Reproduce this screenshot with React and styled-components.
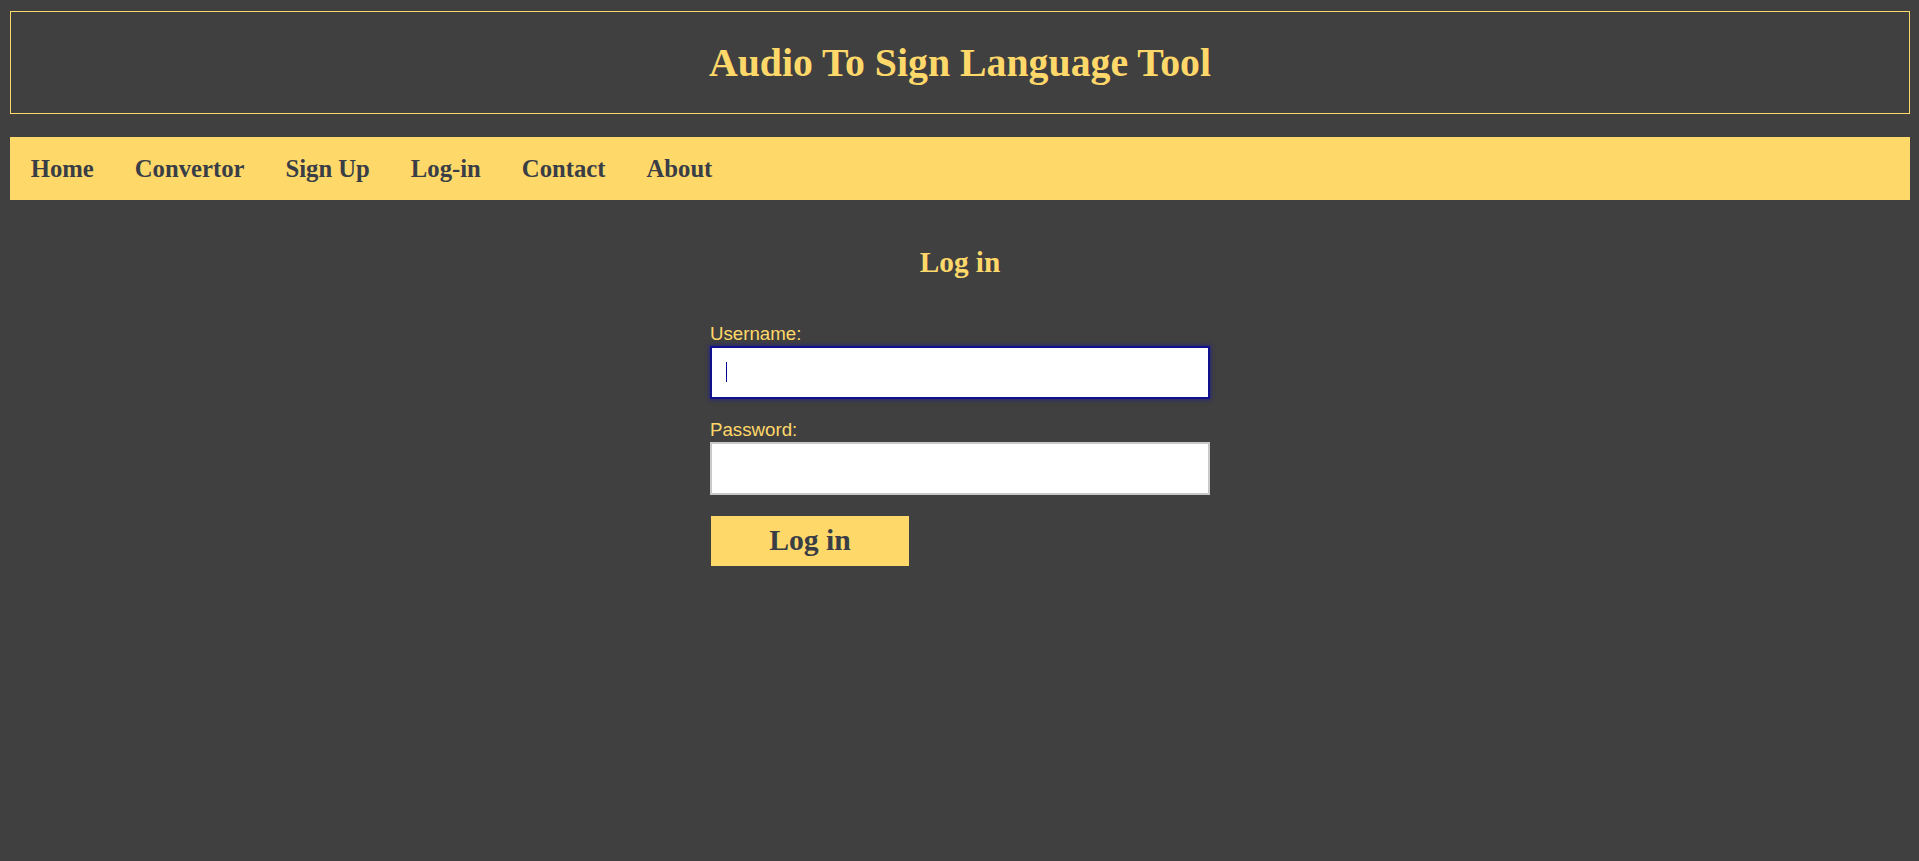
import React from "react";
import styled, { createGlobalStyle } from "styled-components";

const GlobalStyle = createGlobalStyle`
  html, body {
    margin: 0;
    padding: 0;
    background: #404040;
  }
  body {
    font-family: "Liberation Serif", "Times New Roman", serif;
  }
`;

const YELLOW = "#ffd86a";
const DARK = "#393e46";

const Page = styled.div`
  min-height: 861px;
  box-sizing: border-box;
  padding: 11px 9px 0 10px;
  background: #404040;
`;

const Header = styled.header`
  border: 1px solid ${YELLOW};
`;

const Title = styled.h1`
  margin: 27.5px 0;
  text-align: center;
  font-family: "Liberation Serif", "Times New Roman", serif;
  font-weight: bold;
  font-size: 39.8px;
  line-height: 46px;
  color: ${YELLOW};
`;

const Nav = styled.nav`
  margin-top: 23px;
  height: 63px;
  background: ${YELLOW};
  display: flex;
  align-items: center;
`;

const NavLink = styled.a`
  display: block;
  padding: 0 20.5px;
  line-height: 63px;
  font-family: "Liberation Serif", "Times New Roman", serif;
  font-weight: bold;
  font-size: 24.7px;
  color: ${DARK};
  text-decoration: none;
  cursor: pointer;
  &:first-child {
    padding-left: 20.7px;
  }
`;

const Main = styled.main`
  padding-top: 46px;
  display: flex;
  flex-direction: column;
  align-items: center;
`;

const Heading = styled.h2`
  margin: 0 0 45px;
  font-family: "Liberation Serif", "Times New Roman", serif;
  font-weight: bold;
  font-size: 29.3px;
  line-height: 32.4px;
  color: ${YELLOW};
`;

const Form = styled.form`
  width: 500px;
  display: flex;
  flex-direction: column;
  align-items: flex-start;
`;

const Label = styled.label`
  display: block;
  font-family: "Liberation Sans", Arial, sans-serif;
  font-size: 18.7px;
  line-height: 22px;
  color: ${YELLOW};
  margin: ${(p) => (p.$first ? "0" : "19.6px")} 0 1px;
`;

const Field = styled.div`
  position: relative;
  width: 500px;
  height: 53px;
`;

const Caret = styled.span`
  position: absolute;
  left: 16px;
  top: 16px;
  width: 1px;
  height: 20px;
  background: #00008b;
  pointer-events: none;
`;

const Input = styled.input`
  box-sizing: border-box;
  display: block;
  width: 500px;
  height: 53px;
  padding: 0 14px;
  background: #ffffff;
  border: 2px solid #c8c8c8;
  border-radius: 0;
  font-family: "Liberation Sans", Arial, sans-serif;
  font-size: 19.6px;
  color: #000;
  caret-color: transparent;
  outline: none;
  &:focus {
    border-color: #10108c;
    box-shadow: 0 0 4px 1px rgba(20, 20, 160, 0.55);
  }
`;

const Button = styled.button`
  margin-top: 20.5px;
  margin-left: 1px;
  width: 198px;
  height: 50px;
  border: none;
  padding: 0;
  background: ${YELLOW};
  font-family: "Liberation Serif", "Times New Roman", serif;
  font-weight: bold;
  font-size: 29.7px;
  color: ${DARK};
  cursor: pointer;
`;

const links = ["Home", "Convertor", "Sign Up", "Log-in", "Contact", "About"];

export default function App() {
  return (
    <>
      <GlobalStyle />
      <Page>
        <Header>
          <Title>Audio To Sign Language Tool</Title>
        </Header>
        <Nav>
          {links.map((l) => (
            <NavLink key={l}>{l}</NavLink>
          ))}
        </Nav>
        <Main>
          <Heading>Log in</Heading>
          <Form onSubmit={(e) => e.preventDefault()}>
            <Label $first htmlFor="username">Username:</Label>
            <Field>
              <Input id="username" type="text" autoFocus />
              <Caret />
            </Field>
            <Label htmlFor="password">Password:</Label>
            <Input id="password" type="password" />
            <Button type="submit">Log in</Button>
          </Form>
        </Main>
      </Page>
    </>
  );
}
